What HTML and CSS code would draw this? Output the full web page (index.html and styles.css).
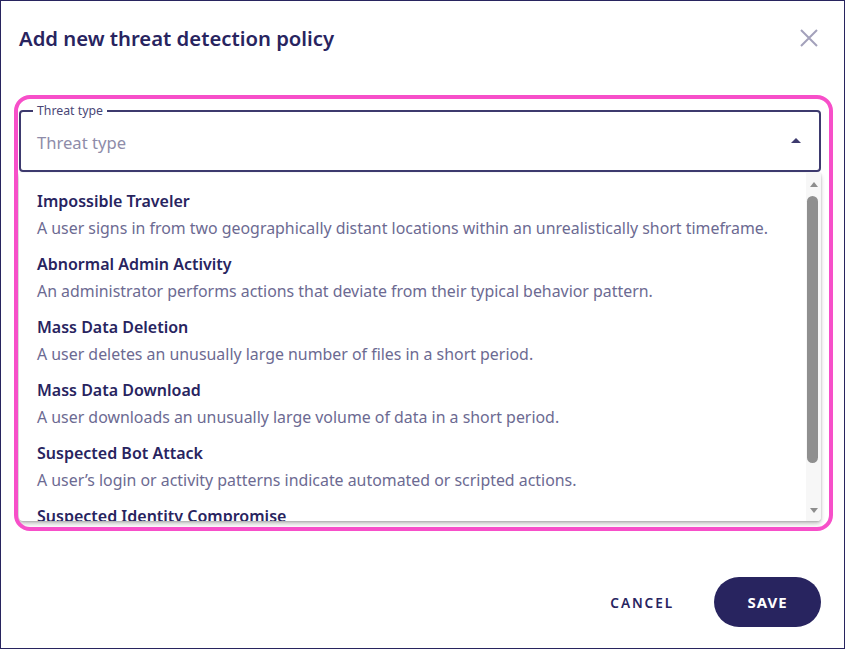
FILE: index.html
```html
<!DOCTYPE html>
<html lang="en">
<head>
    <meta charset="UTF-8">
    <meta name="viewport" content="width=device-width, initial-scale=1.0">
    <title>Add new threat detection policy</title>
    <link rel="stylesheet" href="styles.css">
</head>
<body>
    <div class="dialog">
        <header class="dialog-header">
            <h1>Add new threat detection policy</h1>
            <button class="close-btn" aria-label="Close">
                <svg width="20" height="20" viewBox="0 0 20 20">
                    <path d="M2 2 18 18M18 2 2 18" stroke="currentColor" stroke-width="2" fill="none"/>
                </svg>
            </button>
        </header>

        <div class="dialog-body">
            <div class="field">
                <div class="select">
                    <span class="select-label">Threat type</span>
                    <span class="placeholder">Threat type</span>
                    <svg class="caret" width="24" height="24" viewBox="0 0 24 24">
                        <path d="m7 14 5-5 5 5z" fill="currentColor"/>
                    </svg>
                </div>

                <div class="menu">
                    <ul class="menu-list">
                        <li class="option">
                            <div class="option-title">Impossible Traveler</div>
                            <div class="option-desc">A user signs in from two geographically distant locations within an unrealistically short timeframe.</div>
                        </li>
                        <li class="option">
                            <div class="option-title">Abnormal Admin Activity</div>
                            <div class="option-desc">An administrator performs actions that deviate from their typical behavior pattern.</div>
                        </li>
                        <li class="option">
                            <div class="option-title">Mass Data Deletion</div>
                            <div class="option-desc">A user deletes an unusually large number of files in a short period.</div>
                        </li>
                        <li class="option">
                            <div class="option-title">Mass Data Download</div>
                            <div class="option-desc">A user downloads an unusually large volume of data in a short period.</div>
                        </li>
                        <li class="option">
                            <div class="option-title">Suspected Bot Attack</div>
                            <div class="option-desc">A user’s login or activity patterns indicate automated or scripted actions.</div>
                        </li>
                        <li class="option">
                            <div class="option-title">Suspected Identity Compromise</div>
                        </li>
                    </ul>
                    <div class="scrollbar">
                        <div class="scroll-arrow up"></div>
                        <div class="scroll-track"><div class="scroll-thumb"></div></div>
                        <div class="scroll-arrow down"></div>
                    </div>
                </div>

                <!-- focus highlight drawn over the field -->
                <div class="highlight"></div>
            </div>
        </div>

        <footer class="dialog-actions">
            <button class="btn-text">Cancel</button>
            <button class="btn-primary">Save</button>
        </footer>
    </div>
</body>
</html>
```
FILE: styles.css
```css
* {
    box-sizing: border-box;
}
body {
    font-family: "Noto Sans", sans-serif;
    margin: 0;
    padding: 0;
    background-color: #fff;
    color: #28245f;
}
.dialog {
    height: 100vh;
    border: 1px solid #28245f;
    display: flex;
    flex-direction: column;
}
.dialog-header {
    display: flex;
    align-items: center;
    justify-content: space-between;
    padding: 23px 25px 0 18px;
}
.dialog-header h1 {
    margin: 0;
    font-size: 20.3px;
    line-height: 28px;
    font-weight: 600;
    color: #28245f;
}
.close-btn {
    background: none;
    border: none;
    padding: 0;
    color: #a3a1bb;
    display: flex;
    cursor: pointer;
}
.dialog-body {
    flex: 1;
    padding: 58px 23px 0 18px;
}
.field {
    position: relative;
}
.select {
    position: relative;
    height: 62px;
    border: 2px solid #3d3a6e;
    border-radius: 4px;
    display: flex;
    align-items: center;
    justify-content: space-between;
    padding: 0 11px 0 16px;
}
.select-label {
    position: absolute;
    top: -10px;
    left: 12px;
    padding: 0 4px;
    background: #fff;
    font-size: 12.3px;
    line-height: 17px;
    color: #4a4776;
}
.placeholder {
    font-size: 16.6px;
    margin-top: 2px;
    color: #8e8ca9;
}
.caret {
    color: #3d3a6e;
    margin-top: -1px;
}
.menu {
    margin-top: 1px;
    height: 348px;
    display: flex;
    background: #fff;
    border-radius: 0 0 4px 4px;
    box-shadow: 0 3px 4px rgba(0, 0, 0, 0.22), 0 1px 2px rgba(0, 0, 0, 0.12), 0 0 2px rgba(0, 0, 0, 0.08);
    overflow: hidden;
}
.menu-list {
    flex: 1;
    list-style: none;
    margin: 0;
    padding: 10px 0 0;
    overflow: hidden;
}
.option {
    padding: 6px 18px;
}
.option-title {
    font-size: 16px;
    line-height: 24px;
    font-weight: 600;
    color: #28245f;
}
.option-desc {
    margin-top: 3px;
    font-size: 15.9px;
    line-height: 24px;
    color: #6c6a92;
    white-space: nowrap;
}
.scrollbar {
    width: 15px;
    background: #f7f7f7;
    display: flex;
    flex-direction: column;
}
.scroll-arrow {
    height: 20px;
    display: flex;
    align-items: center;
    justify-content: center;
}
.scroll-arrow::before {
    content: "";
    border-left: 4.5px solid transparent;
    border-right: 4.5px solid transparent;
}
.scroll-arrow.up::before {
    border-bottom: 5px solid #8d8d8d;
    margin-top: 3px;
}
.scroll-arrow.down::before {
    border-top: 5px solid #8d8d8d;
    margin-top: -2px;
}
.scroll-track {
    flex: 1;
    padding-top: 3px;
}
.scroll-thumb {
    width: 11px;
    height: 267px;
    margin-left: 1px;
    border-radius: 6px;
    background: #8f8f8f;
}
.highlight {
    position: absolute;
    top: -15px;
    left: -5px;
    right: -12px;
    bottom: -10px;
    border: 4px solid #f74fc9;
    border-radius: 16px;
    pointer-events: none;
}
.dialog-actions {
    display: flex;
    justify-content: flex-end;
    align-items: center;
    gap: 24px;
    padding: 0 23px 21px;
}
.btn-text {
    background: none;
    border: none;
    padding: 0 16px;
    font-family: inherit;
    font-size: 13.6px;
    font-weight: 600;
    letter-spacing: 1.9px;
    text-transform: uppercase;
    color: #28245f;
    cursor: pointer;
}
.btn-primary {
    width: 107px;
    height: 50px;
    border: none;
    border-radius: 25px;
    background-color: #28245f;
    color: #fff;
    font-family: inherit;
    font-size: 15px;
    font-weight: 700;
    letter-spacing: 1px;
    text-transform: uppercase;
    cursor: pointer;
}
.btn-primary:hover {
    background-color: #1c1947;
}
```
